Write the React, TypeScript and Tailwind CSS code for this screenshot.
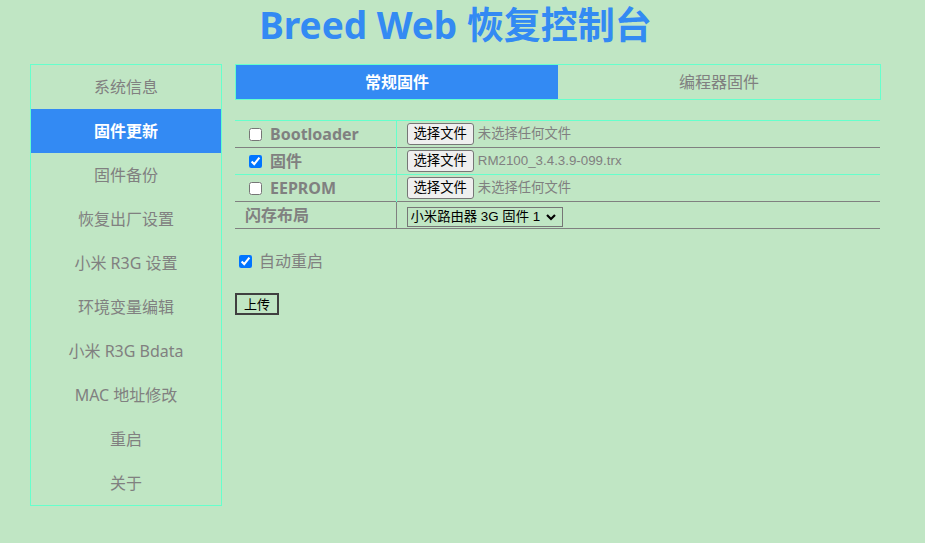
import React from 'react';

const font = { fontFamily: '"Noto Sans", "Noto Sans CJK SC", sans-serif' };
const ctrl = { fontFamily: '"Liberation Sans", "Noto Sans CJK SC", sans-serif' };

const menu = [
  '系统信息',
  '固件更新',
  '固件备份',
  '恢复出厂设置',
  '小米 R3G 设置',
  '环境变量编辑',
  '小米 R3G Bdata',
  'MAC 地址修改',
  '重启',
  '关于',
];

const FileField = ({ name }: { name: string }) => (
  <div className="flex items-center gap-[4px]" style={ctrl}>
    <button className="h-[22px] px-[6px] text-[13.33px] leading-none text-black bg-[#efefef] border border-[#767676] rounded-[3px]">
      选择文件
    </button>
    <span className="text-[13.33px] text-[#808080]">{name}</span>
  </div>
);

export default function App() {
  const rows = [
    { label: 'Bootloader', checked: false, file: '未选择任何文件', line: 'border-[#808080]' },
    { label: '固件', checked: true, file: 'RM2100_3.4.3.9-099.trx', line: 'border-[#66ffcc]' },
    { label: 'EEPROM', checked: false, file: '未选择任何文件', line: 'border-[#808080]' },
  ];

  return (
    <div className="min-h-[543px] bg-[#c0e6c4]" style={font}>
      <div className="ml-[30px] w-[851px]">
        <h1 className="text-center text-[37px] font-bold leading-[50px] text-[#338af3] pb-[14px]">
          Breed Web 恢复控制台
        </h1>

        <div className="flex items-start gap-[13px]">
          {/* sidebar */}
          <ul className="w-[192px] border border-[#66ffcc]">
            {menu.map((item, i) => (
              <li
                key={item}
                className={
                  i === 1
                    ? 'h-[44px] flex items-center justify-center text-[16px] font-bold text-white bg-[#338af3]'
                    : 'h-[44px] flex items-center justify-center text-[16px] text-[#808080]'
                }
              >
                {item}
              </li>
            ))}
          </ul>

          {/* main */}
          <div className="w-[646px]">
            <div className="flex h-[36px] border border-[#66ffcc]">
              <div className="w-[322px] flex items-center justify-center bg-[#338af3] text-white font-bold text-[16px]">
                常规固件
              </div>
              <div className="flex-1 flex items-center justify-center text-[#808080] text-[16px]">
                编程器固件
              </div>
            </div>

            <table className="mt-[20px] w-[645px] border-collapse">
              <tbody>
                {rows.map((r, i) => (
                  <tr
                    key={r.label}
                    className={`h-[27px] border-b ${r.line} ${i === 0 ? 'border-t border-t-[#66ffcc]' : ''}`}
                  >
                    <td className="w-[161px] pl-[10px] border-r border-[#66ffcc]">
                      <label className="flex items-center gap-[5px] text-[16px] font-bold text-[#808080]">
                        <input type="checkbox" defaultChecked={r.checked} className="m-[3px_3px_3px_4px] w-[13px] h-[13px]" />
                        {r.label}
                      </label>
                    </td>
                    <td className="pl-[10px]">
                      <FileField name={r.file} />
                    </td>
                  </tr>
                ))}
                <tr className="h-[27px] border-b border-[#808080]">
                  <td className="pl-[10px] border-r border-[#808080] text-[16px] font-bold text-[#808080]">
                    闪存布局
                  </td>
                  <td className="pl-[10px]">
                    <div className="inline-flex items-center h-[20px] border border-[#767676] pr-[5px]" style={ctrl}>
                      <select className="appearance-none h-full pl-[3px] pr-[4px] text-[13.33px] text-black leading-none">
                        <option>小米路由器 3G 固件 1</option>
                      </select>
                      <svg width="12" height="8" viewBox="0 0 12 8">
                        <path d="M2 2 L6 6 L10 2" fill="none" stroke="#000" strokeWidth="2.2" />
                      </svg>
                    </div>
                  </td>
                </tr>
              </tbody>
            </table>

            <label className="mt-[20px] flex items-center gap-[4px] text-[16px] text-[#808080]">
              <input type="checkbox" defaultChecked className="m-[3px_3px_3px_4px] w-[13px] h-[13px]" />
              自动重启
            </label>

            <button className="mt-[20px] h-[22px] px-[7px] text-[13px] leading-none text-black border-2 border-[#404040]">
              上传
            </button>
          </div>
        </div>
      </div>
    </div>
  );
}
